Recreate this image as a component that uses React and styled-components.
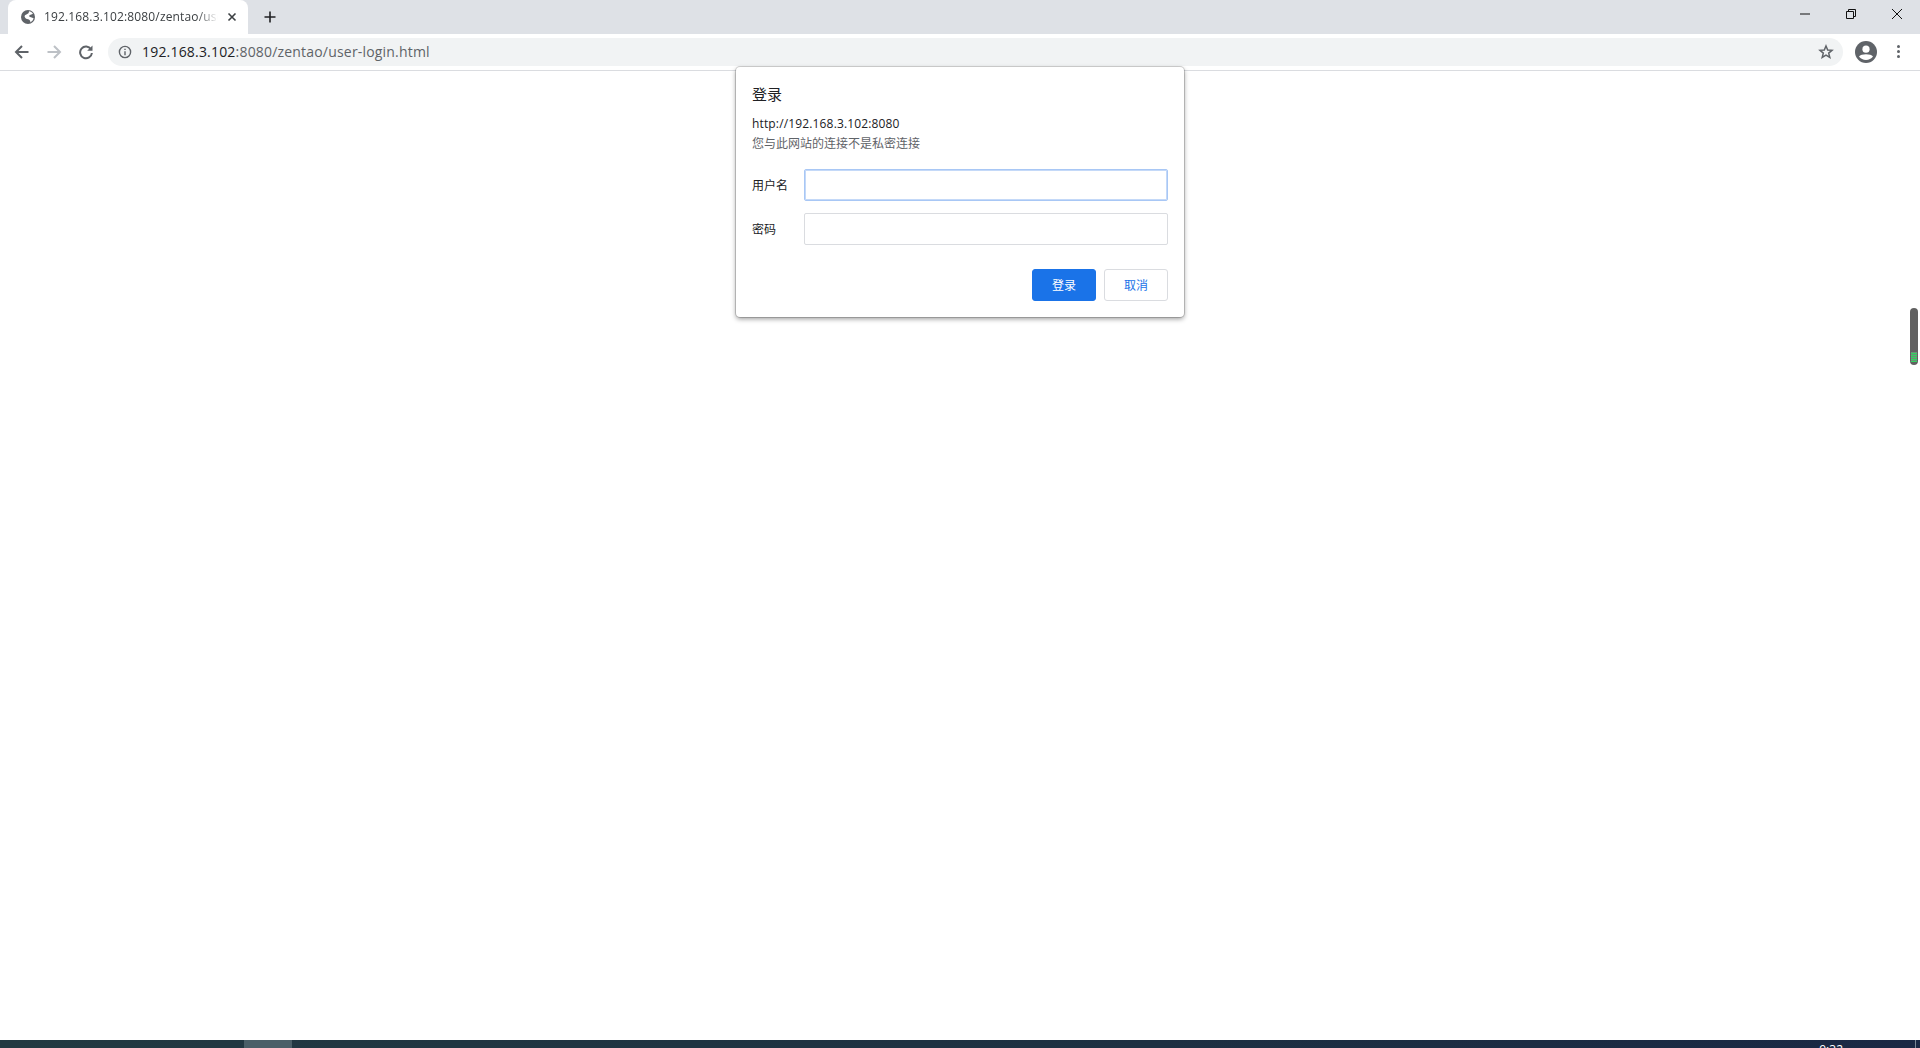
import React from "react";
import styled, { createGlobalStyle } from "styled-components";

const FONT = `"Open Sans", "Noto Sans", "Noto Sans CJK SC", sans-serif`;

const GlobalStyle = createGlobalStyle`
  html, body {
    margin: 0;
    height: 100%;
    overflow: hidden;
    background: #fff;
  }
  #root {
    height: 100%;
  }
  * {
    box-sizing: border-box;
  }
`;

const App = () => (
  <Screen>
    <GlobalStyle />
    <TabStrip>
      <Tab>
        <Favicon viewBox="0 0 14 14">
          <circle cx="7" cy="7" r="7" fill="#5f6368" />
          <path d="M8 1.200C9.500 1.500 11 2.300 12 3.500 10.800 4.800 9.200 4.500 8.300 5.500 7.500 6.400 8.800 7 10 7.300L12.600 8.300C12.200 10 11 11.600 9.300 12.400 9.600 10.800 8.800 9.800 7.200 9.300 5.500 8.800 3.800 8.300 3.600 6.500 3.400 4.800 6 4.200 7.200 3.400 7.800 2.900 8 2.100 8 1.200Z" fill="#fff" />
        </Favicon>
        <TabTitle>192.168.3.102:8080/zentao/user-login.html</TabTitle>
        <TabClose viewBox="0 0 10 10">
          <path d="M1.500 1.500 8.500 8.500M8.500 1.500 1.500 8.500" />
        </TabClose>
      </Tab>
      <NewTab viewBox="0 0 12 12">
        <path d="M6 0.500V11.500M0.500 6H11.500" />
      </NewTab>
      <WindowControls>
        <WindowButton>
          <svg viewBox="0 0 10 10" width="10" height="10">
            <path d="M0 5H10" stroke="#111" fill="none" />
          </svg>
        </WindowButton>
        <WindowButton>
          <svg viewBox="0 0 10 10" width="10" height="10">
            <path d="M.5 2.500H7.500V9.500H.5ZM2.500 2.500V.5H9.500V7.500H7.500" stroke="#111" fill="none" />
          </svg>
        </WindowButton>
        <WindowButton>
          <svg viewBox="0 0 10 10" width="10" height="10">
            <path d="M0 0 10 10M10 0 0 10" stroke="#111" fill="none" />
          </svg>
        </WindowButton>
      </WindowControls>
    </TabStrip>
    <Toolbar>
      <NavIcon viewBox="0 0 16 16" $color="#5f6368">
        <path d="M14.500 8H2M8 2 2 8 8 14" />
      </NavIcon>
      <NavIcon viewBox="0 0 16 16" $color="#bdc1c6">
        <path d="M1.500 8H14M8 2 14 8 8 14" />
      </NavIcon>
      <NavIcon viewBox="0 0 16 16" $color="#5f6368" $wide>
        <path d="M13 5.200A5.900 5.900 0 1 0 13.900 9" />
        <path d="M14.500 1.500V6.800H9.200Z" fill="#5f6368" stroke="none" />
      </NavIcon>
      <Omnibox>
        <InfoIcon viewBox="0 0 14 14">
          <circle cx="7" cy="7" r="5.600" />
          <path d="M7 6.300V10.200M7 3.800V5" />
        </InfoIcon>
        <Url>
          <UrlHost>192.168.3.102</UrlHost>:8080/zentao/user-login.html
        </Url>
        <StarIcon viewBox="0 0 16 16">
          <path d="M8 2 9.700 6 14 6.300 10.700 9.100 11.800 13.400 8 11.100 4.200 13.400 5.300 9.100 2 6.300 6.300 6Z" />
        </StarIcon>
      </Omnibox>
      <Avatar viewBox="0 0 22 22">
        <circle cx="11" cy="11" r="11" fill="#5f6368" />
        <circle cx="11" cy="8.200" r="3.600" fill="#fff" />
        <path d="M4 15.500C6 12.600 16 12.600 18 15.500 16.400 17.800 13.800 19 11 19S5.600 17.800 4 15.500Z" fill="#fff" />
      </Avatar>
      <MenuDots>
        <span />
        <span />
        <span />
      </MenuDots>
    </Toolbar>
    <Page>
      <Dialog>
        <DialogTitle>登录</DialogTitle>
        <Origin>http://192.168.3.102:8080</Origin>
        <Notice>您与此网站的连接不是私密连接</Notice>
        <Fields>
          <Field>
            <FieldLabel>用户名</FieldLabel>
            <FieldInput $focused />
          </Field>
          <Field>
            <FieldLabel>密码</FieldLabel>
            <FieldInput type="password" />
          </Field>
        </Fields>
        <Actions>
          <ActionButton $primary>登录</ActionButton>
          <ActionButton>取消</ActionButton>
        </Actions>
      </Dialog>
      <ScrollPill />
    </Page>
    <Taskbar>
      <TaskItem />
      <Clock>9:32</Clock>
      <ShowDesktop />
    </Taskbar>
  </Screen>
);

export default App;

const Screen = styled.div`
  height: 100%;
  display: flex;
  flex-direction: column;
  font-family: ${FONT};
  background: #fff;
`;

const TabStrip = styled.div`
  height: 34px;
  flex: none;
  display: flex;
  align-items: flex-end;
  padding-left: 8px;
  background: #dee1e6;
`;

const Tab = styled.div`
  width: 240px;
  height: 34px;
  display: flex;
  align-items: center;
  padding: 0 11px 0 13px;
  background: #fff;
  border-radius: 8px 8px 0 0;
`;

const Favicon = styled.svg`
  width: 14px;
  height: 14px;
  flex: none;
`;

const TabTitle = styled.span`
  flex: 1;
  margin: 0 9px;
  overflow: hidden;
  white-space: nowrap;
  font-size: 12px;
  letter-spacing: 0.15px;
  line-height: 16px;
  color: #3c4043;
  -webkit-mask-image: linear-gradient(90deg, #000 88%, transparent);
  mask-image: linear-gradient(90deg, #000 88%, transparent);
`;

const TabClose = styled.svg`
  width: 10px;
  height: 10px;
  flex: none;
  fill: none;
  stroke: #3c4043;
  stroke-width: 1.6;
`;

const NewTab = styled.svg`
  width: 12px;
  height: 12px;
  flex: none;
  margin: 0 0 11px 16px;
  fill: none;
  stroke: #202124;
  stroke-width: 1.6;
`;

const WindowControls = styled.div`
  margin-left: auto;
  align-self: flex-start;
  display: flex;
`;

const WindowButton = styled.div`
  width: 46px;
  height: 28px;
  display: flex;
  align-items: center;
  justify-content: center;

  svg {
    display: block;
  }
`;

const Toolbar = styled.div`
  height: 37px;
  flex: none;
  display: flex;
  align-items: center;
  padding: 0 12px 1px 14px;
  background: #fff;
  border-bottom: 1px solid #dadce0;
`;

const NavIcon = styled.svg`
  width: 16px;
  height: 16px;
  flex: none;
  margin-right: ${(p) => (p.$wide ? "14px" : "16px")};
  fill: none;
  stroke: ${(p) => p.$color};
  stroke-width: 2;
`;

const Omnibox = styled.div`
  width: 1735px;
  height: 28px;
  flex: none;
  display: flex;
  align-items: center;
  padding: 0 9px 0 10px;
  background: #f1f3f4;
  border-radius: 14px;
`;

const InfoIcon = styled.svg`
  width: 14px;
  height: 14px;
  flex: none;
  fill: none;
  stroke: #5f6368;
  stroke-width: 1.4;
`;

const Url = styled.span`
  flex: 1;
  margin-left: 10px;
  font-size: 14px;
  letter-spacing: 0.19px;
  color: #5f6368;
  white-space: nowrap;
`;

const UrlHost = styled.span`
  color: #202124;
`;

const StarIcon = styled.svg`
  width: 16px;
  height: 16px;
  flex: none;
  fill: none;
  stroke: #5f6368;
  stroke-width: 1.5;
`;

const Avatar = styled.svg`
  width: 22px;
  height: 22px;
  flex: none;
  margin-left: 12px;
`;

const MenuDots = styled.div`
  flex: none;
  margin-left: 20px;
  display: flex;
  flex-direction: column;
  gap: 2px;

  span {
    width: 3px;
    height: 3px;
    border-radius: 50%;
    background: #5f6368;
  }
`;

const Page = styled.main`
  flex: 1;
  position: relative;
  background: #fff;
`;

const Dialog = styled.section`
  position: absolute;
  top: -4px;
  left: 736px;
  width: 448px;
  height: 250px;
  padding: 16px;
  background: #fff;
  border-radius: 4px;
  box-shadow: 0 0 0 1px rgba(0, 0, 0, 0.16), 0 2px 5px rgba(0, 0, 0, 0.4);
`;

const DialogTitle = styled.h2`
  margin: 1px 0 0;
  font-size: 15px;
  line-height: 20px;
  font-weight: 400;
  color: #202124;
`;

const Origin = styled.div`
  margin-top: 10px;
  font-size: 12px;
  letter-spacing: 0.15px;
  line-height: 20px;
  color: #202124;
`;

const Notice = styled.div`
  font-size: 12px;
  line-height: 20px;
  color: #5f6368;
`;

const Fields = styled.div`
  margin-top: 15px;
  display: flex;
  flex-direction: column;
  gap: 12px;
`;

const Field = styled.label`
  display: flex;
  align-items: center;
`;

const FieldLabel = styled.span`
  width: 52px;
  flex: none;
  font-size: 12px;
  color: #202124;
`;

const FieldInput = styled.input`
  width: 364px;
  height: 32px;
  flex: none;
  padding: 0 8px;
  background: #fff;
  border: 1px solid ${(p) => (p.$focused ? "#a8c7f5" : "#dadce0")};
  border-radius: 2px;
  box-shadow: ${(p) => (p.$focused ? "inset 0 0 0 1px #c4d9f8" : "none")};
  outline: none;
`;

const Actions = styled.div`
  margin-top: 24px;
  display: flex;
  justify-content: flex-end;
  gap: 8px;
`;

const ActionButton = styled.button`
  width: 64px;
  height: 32px;
  padding: 0;
  font-family: ${FONT};
  font-size: 12px;
  color: ${(p) => (p.$primary ? "#fff" : "#1a73e8")};
  background: ${(p) => (p.$primary ? "#1a73e8" : "#fff")};
  border: 1px solid ${(p) => (p.$primary ? "#1a73e8" : "#dadce0")};
  border-radius: 3px;
`;

const ScrollPill = styled.div`
  position: absolute;
  top: 237px;
  right: 2px;
  width: 8px;
  height: 57px;
  border-radius: 4px;
  background: repeating-linear-gradient(0deg, #2fd560 0 1.5px, #6c8f76 1.5px 2px) center bottom 3px / 6px 10px no-repeat, #616161;
`;

const Taskbar = styled.footer`
  height: 8px;
  flex: none;
  position: relative;
  overflow: hidden;
  display: flex;
  background: linear-gradient(90deg, #223a42, #1d3042 60%, #1a2844);
`;

const TaskItem = styled.div`
  width: 48px;
  margin-left: 244px;
  background: #4a5f68;
`;

const Clock = styled.span`
  margin-left: auto;
  margin-right: 72px;
  font-size: 12px;
  line-height: 16px;
  color: #fff;
  transform: translateY(2px);
`;

const ShowDesktop = styled.div`
  width: 1px;
  margin-right: 4px;
  background: #7a8796;
`;
